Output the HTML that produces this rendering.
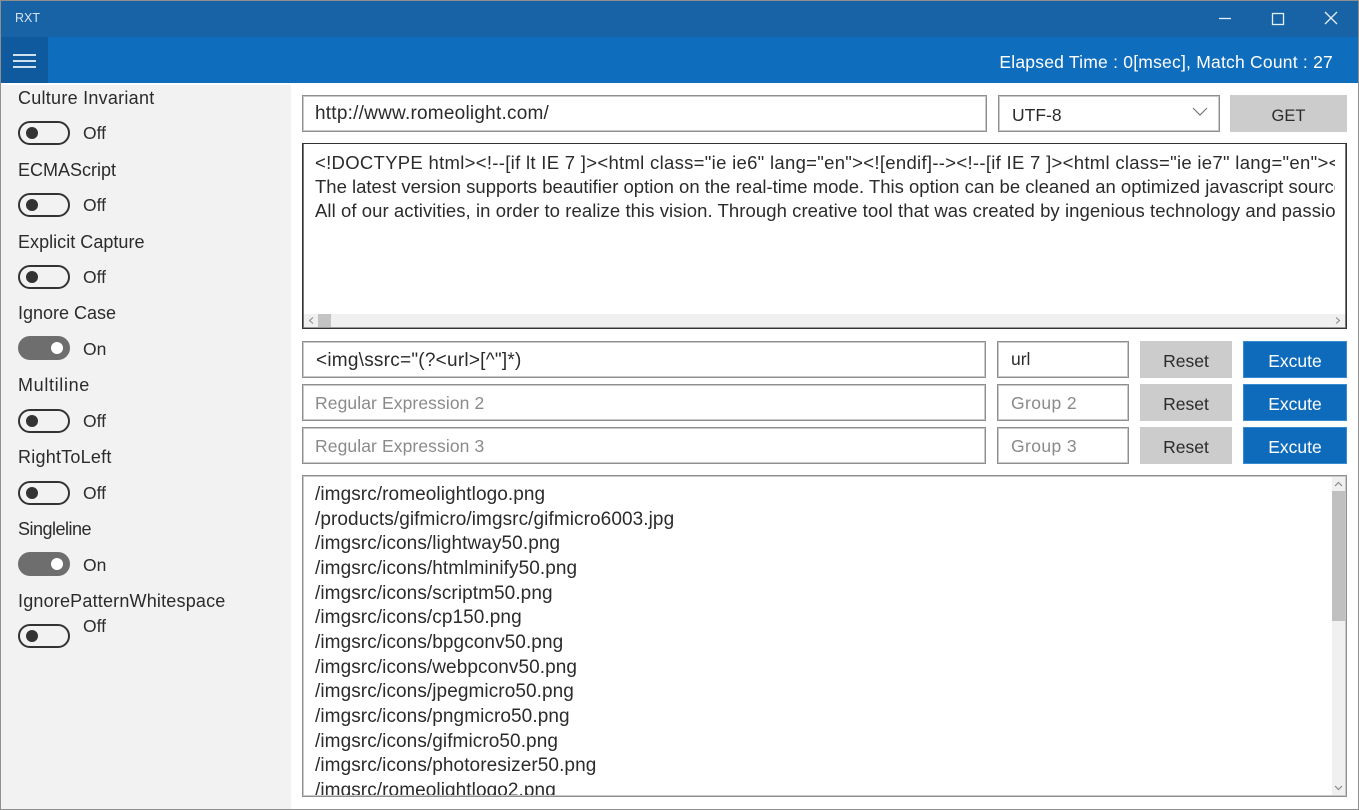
<!DOCTYPE html>
<html lang="en"><head><meta charset="utf-8"><title>RXT</title>
<style>
html,body{margin:0;padding:0;width:1359px;height:810px;overflow:hidden;background:#fff}
body{position:relative;font-family:"Liberation Sans",sans-serif;font-size:17.5px;color:#2b2b2b}
.a{position:absolute;box-sizing:border-box;white-space:nowrap}
.t{position:absolute;white-space:nowrap;line-height:24px;height:24px}
.box{position:absolute;box-sizing:border-box;background:#fff;border:1px solid #8e8e8e;box-shadow:inset 0 0 0 1px #c9c9c9}
.btn{position:absolute;box-sizing:border-box;text-align:center;background:#ccc;color:#2b2b2b;line-height:37px}
.ex{background:#0e6bbb;color:#fff;border:1px solid #3a8ad0;line-height:36px}
.ph{color:#8a8a8a}
.sw{position:absolute;left:18px;width:52px;height:24px;box-sizing:border-box;border:2px solid #333;border-radius:12px}
.sw i{position:absolute;left:6px;top:4px;width:12px;height:12px;border-radius:50%;background:#333}
.sw.on{background:#6e6e6e;border-color:#6e6e6e}
.sw.on i{left:auto;right:5px;background:#fff}
.lb{left:18px;font-size:18px}
.st{left:83px}
.big{font-size:19px}
</style></head><body>

<div class="a" style="left:0;top:0;width:1359px;height:37px;background:#1763a6"></div>
<div class="a" style="left:0;top:37px;width:1359px;height:46px;background:#0f6dbd"></div>
<div class="a" style="left:1px;top:37px;width:47px;height:46px;background:#0f5a9f"></div>
<div class="a" style="left:13px;top:54px;width:23px;height:2px;background:#cfe0f0"></div>
<div class="a" style="left:13px;top:60px;width:23px;height:2px;background:#cfe0f0"></div>
<div class="a" style="left:13px;top:66px;width:23px;height:2px;background:#cfe0f0"></div>
<div class="t" style="left:15px;top:6px;font-size:12.5px;color:#d5e3f0">RXT</div>

<svg class="a" style="left:1215px;top:8px" width="130" height="22" fill="none" stroke="#e6eef6" stroke-width="1.3">
<path d="M4 10.5H16"/><rect x="57.5" y="5.5" width="11" height="11"/><path d="M110 6L122 18M122 6L110 18" transform="translate(0,-2)"/>
</svg>
<div class="t" style="right:26px;top:50px;color:#fff;letter-spacing:.22px">Elapsed Time : 0[msec], Match Count : 27</div>

<div class="a" style="left:1px;top:85px;width:290px;height:724px;background:#f2f2f2"></div>
<div class="a" style="left:0;top:0;width:1359px;height:810px;border:1px solid #8f8f8f"></div>

<div class="t lb" style="top:86px;letter-spacing:.26px">Culture Invariant</div>
<div class="sw" style="top:121px"><i></i></div><div class="t st" style="top:121px">Off</div>
<div class="t lb" style="top:158px">ECMAScript</div>
<div class="sw" style="top:193px"><i></i></div><div class="t st" style="top:193px">Off</div>
<div class="t lb" style="top:230px;letter-spacing:.03px">Explicit Capture</div>
<div class="sw" style="top:265px"><i></i></div><div class="t st" style="top:265px">Off</div>
<div class="t lb" style="top:301px">Ignore Case</div>
<div class="sw on" style="top:336px"><i></i></div><div class="t st" style="top:337px">On</div>
<div class="t lb" style="top:373px;letter-spacing:.66px">Multiline</div>
<div class="sw" style="top:409px"><i></i></div><div class="t st" style="top:409px">Off</div>
<div class="t lb" style="top:445px;letter-spacing:.23px">RightToLeft</div>
<div class="sw" style="top:481px"><i></i></div><div class="t st" style="top:481px">Off</div>
<div class="t lb" style="top:517px;letter-spacing:-.5px">Singleline</div>
<div class="sw on" style="top:552px"><i></i></div><div class="t st" style="top:553px">On</div>
<div class="t lb" style="top:589px;letter-spacing:.19px">IgnorePatternWhitespace</div>
<div class="sw" style="top:624px"><i></i></div><div class="t st" style="top:614px">Off</div>

<div class="box" style="left:302px;top:95px;width:685px;height:37px"></div>
<div class="t big" style="left:315px;top:102px;letter-spacing:.23px">http://www.romeolight.com/</div>
<div class="box" style="left:998px;top:95px;width:222px;height:37px"></div>
<div class="t" style="left:1012px;top:103px">UTF-8</div>
<svg class="a" style="left:1190px;top:105px" width="20" height="14" fill="none" stroke="#777" stroke-width="1.2"><path d="M3 3L10 10L17 3"/></svg>
<div class="btn" style="left:1230px;top:95px;width:117px;height:37px;font-size:16.5px;line-height:43px">GET</div>

<div class="box" style="left:302px;top:143px;width:1045px;height:186px;border-color:#333;box-shadow:inset 1px 0 0 #777,inset -1px 0 0 #777,inset 0 -1px 0 #999"></div>
<div class="a" style="left:315px;top:151px;width:1020px;height:72px;overflow:hidden;line-height:24px;font-size:18.5px">
<div style="letter-spacing:.3px">&lt;!DOCTYPE html&gt;&lt;!--[if lt IE 7 ]&gt;&lt;html class="ie ie6" lang="en"&gt;&lt;![endif]--&gt;&lt;!--[if IE 7 ]&gt;&lt;html class="ie ie7" lang="en"&gt;&lt;![endif]--&gt;</div>
<div>The latest version supports beautifier option on the real-time mode. This option can be cleaned an optimized javascript source code.</div>
<div style="letter-spacing:.07px">All of our activities, in order to realize this vision. Through creative tool that was created by ingenious technology and passion for the future.</div>
</div>
<div class="a" style="left:304px;top:314px;width:1041px;height:13px;background:#f0f0f0"></div>
<div class="a" style="left:318px;top:314px;width:13px;height:13px;background:#c4c4c4"></div>
<svg class="a" style="left:304px;top:314px" width="1041" height="13" fill="none" stroke="#8a8a8a" stroke-width="1.1"><path d="M9 3.5L5.5 6.5L9 9.5M1032 3.5L1035.5 6.5L1032 9.5"/></svg>

<div class="box" style="left:302px;top:341px;width:684px;height:37px"></div>
<div class="t big" style="left:316px;top:349px;letter-spacing:.24px">&lt;img\ssrc="(?&lt;url&gt;[^"]*)</div>
<div class="box" style="left:997px;top:341px;width:132px;height:37px"></div>
<div class="t" style="left:1011px;top:347px">url</div>
<div class="btn" style="left:1140px;top:341px;width:92px;height:37px;line-height:40px">Reset</div>
<div class="btn ex" style="left:1243px;top:341px;width:104px;height:37px;line-height:38px">Excute</div>

<div class="box" style="left:302px;top:384px;width:684px;height:37px"></div>
<div class="t ph" style="left:315px;top:391px;letter-spacing:.1px">Regular Expression 2</div>
<div class="box" style="left:997px;top:384px;width:132px;height:37px"></div>
<div class="t ph" style="left:1011px;top:391px;letter-spacing:.4px">Group 2</div>
<div class="btn" style="left:1140px;top:384px;width:92px;height:37px;line-height:40px">Reset</div>
<div class="btn ex" style="left:1243px;top:384px;width:104px;height:37px;line-height:38px">Excute</div>

<div class="box" style="left:302px;top:427px;width:684px;height:37px"></div>
<div class="t ph" style="left:315px;top:434px;letter-spacing:.1px">Regular Expression 3</div>
<div class="box" style="left:997px;top:427px;width:132px;height:37px"></div>
<div class="t ph" style="left:1011px;top:434px;letter-spacing:.4px">Group 3</div>
<div class="btn" style="left:1140px;top:427px;width:92px;height:37px;line-height:40px">Reset</div>
<div class="btn ex" style="left:1243px;top:427px;width:104px;height:37px;line-height:38px">Excute</div>

<div class="box" style="left:302px;top:475px;width:1045px;height:322px"></div>
<div class="a" style="left:315px;top:483px;width:1010px;height:312px;overflow:hidden;line-height:24.65px;font-size:19px;letter-spacing:.08px">
<div>/imgsrc/romeolightlogo.png</div>
<div>/products/gifmicro/imgsrc/gifmicro6003.jpg</div>
<div>/imgsrc/icons/lightway50.png</div>
<div>/imgsrc/icons/htmlminify50.png</div>
<div>/imgsrc/icons/scriptm50.png</div>
<div>/imgsrc/icons/cp150.png</div>
<div>/imgsrc/icons/bpgconv50.png</div>
<div>/imgsrc/icons/webpconv50.png</div>
<div>/imgsrc/icons/jpegmicro50.png</div>
<div>/imgsrc/icons/pngmicro50.png</div>
<div>/imgsrc/icons/gifmicro50.png</div>
<div>/imgsrc/icons/photoresizer50.png</div>
<div>/imgsrc/romeolightlogo2.png</div>
</div>
<div class="a" style="left:1332px;top:477px;width:13px;height:318px;background:#f0f0f0"></div>
<div class="a" style="left:1332px;top:491px;width:13px;height:130px;background:#c0c0c0"></div>
<svg class="a" style="left:1332px;top:477px" width="13" height="318" fill="none" stroke="#8a8a8a" stroke-width="1.2"><path d="M3 9L6.5 5.5L10 9M3 309L6.5 312.5L10 309"/></svg>

</body></html>
